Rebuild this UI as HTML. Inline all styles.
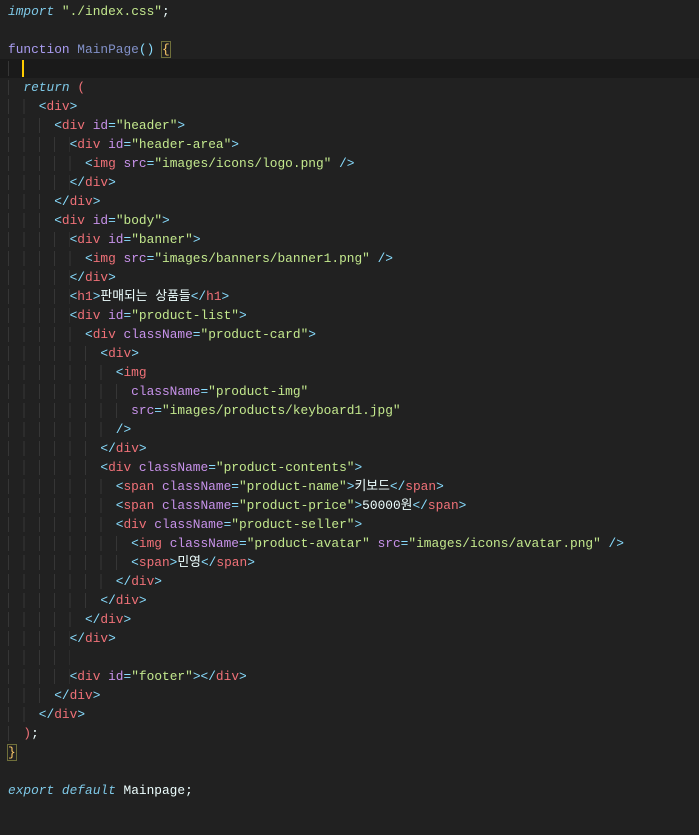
<!DOCTYPE html>
<html><head><meta charset="utf-8"><style>
html,body{margin:0;padding:0;background:#212121;width:699px;height:835px;overflow:hidden}
#c{position:absolute;top:2px;left:0;width:699px;font-family:"Liberation Mono","Noto Sans CJK KR",monospace;font-size:12.83px;color:#eeffff}
.l{height:19px;line-height:19px;white-space:pre;padding-left:8px;position:relative}
.cur{background:#1a1a1a}
.i{background:repeating-linear-gradient(to right,#363636 0 1px,transparent 1px 15.4px)}
.k{color:#7ec8e6;font-style:italic}
.f{color:#a99cf0}
.n{color:#8291c9}
.s{color:#c3e88d}
.p{color:#89ddff}
.t{color:#f07178}
.a{color:#c792ea}
.r{color:#f07178}
.y{color:#ffcb6b}
.box{outline:1px solid #6f6f3a}
.caret{position:absolute;left:22px;top:1px;width:2px;height:17px;background:#ffcc00}
</style></head><body><div id="c">
<div class="l"><span class="k">import</span> <span class="s">"./index.css"</span>;</div>
<div class="l"> </div>
<div class="l"><span class="f">function</span> <span class="n">MainPage</span><span class="p">()</span> <span class="y box">{</span></div>
<div class="l cur"><span class="i">  </span><span class="caret"></span></div>
<div class="l"><span class="i">  </span><span class="k">return</span> <span class="r">(</span></div>
<div class="l"><span class="i">    </span><span class="p">&lt;</span><span class="t">div</span><span class="p">&gt;</span></div>
<div class="l"><span class="i">      </span><span class="p">&lt;</span><span class="t">div</span> <span class="a">id</span><span class="p">=</span><span class="s">"header"</span><span class="p">&gt;</span></div>
<div class="l"><span class="i">        </span><span class="p">&lt;</span><span class="t">div</span> <span class="a">id</span><span class="p">=</span><span class="s">"header-area"</span><span class="p">&gt;</span></div>
<div class="l"><span class="i">          </span><span class="p">&lt;</span><span class="t">img</span> <span class="a">src</span><span class="p">=</span><span class="s">"images/icons/logo.png"</span> <span class="p">/&gt;</span></div>
<div class="l"><span class="i">        </span><span class="p">&lt;/</span><span class="t">div</span><span class="p">&gt;</span></div>
<div class="l"><span class="i">      </span><span class="p">&lt;/</span><span class="t">div</span><span class="p">&gt;</span></div>
<div class="l"><span class="i">      </span><span class="p">&lt;</span><span class="t">div</span> <span class="a">id</span><span class="p">=</span><span class="s">"body"</span><span class="p">&gt;</span></div>
<div class="l"><span class="i">        </span><span class="p">&lt;</span><span class="t">div</span> <span class="a">id</span><span class="p">=</span><span class="s">"banner"</span><span class="p">&gt;</span></div>
<div class="l"><span class="i">          </span><span class="p">&lt;</span><span class="t">img</span> <span class="a">src</span><span class="p">=</span><span class="s">"images/banners/banner1.png"</span> <span class="p">/&gt;</span></div>
<div class="l"><span class="i">        </span><span class="p">&lt;/</span><span class="t">div</span><span class="p">&gt;</span></div>
<div class="l"><span class="i">        </span><span class="p">&lt;</span><span class="t">h1</span><span class="p">&gt;</span>판매되는 상품들<span class="p">&lt;/</span><span class="t">h1</span><span class="p">&gt;</span></div>
<div class="l"><span class="i">        </span><span class="p">&lt;</span><span class="t">div</span> <span class="a">id</span><span class="p">=</span><span class="s">"product-list"</span><span class="p">&gt;</span></div>
<div class="l"><span class="i">          </span><span class="p">&lt;</span><span class="t">div</span> <span class="a">className</span><span class="p">=</span><span class="s">"product-card"</span><span class="p">&gt;</span></div>
<div class="l"><span class="i">            </span><span class="p">&lt;</span><span class="t">div</span><span class="p">&gt;</span></div>
<div class="l"><span class="i">              </span><span class="p">&lt;</span><span class="t">img</span></div>
<div class="l"><span class="i">                </span><span class="a">className</span><span class="p">=</span><span class="s">"product-img"</span></div>
<div class="l"><span class="i">                </span><span class="a">src</span><span class="p">=</span><span class="s">"images/products/keyboard1.jpg"</span></div>
<div class="l"><span class="i">              </span><span class="p">/&gt;</span></div>
<div class="l"><span class="i">            </span><span class="p">&lt;/</span><span class="t">div</span><span class="p">&gt;</span></div>
<div class="l"><span class="i">            </span><span class="p">&lt;</span><span class="t">div</span> <span class="a">className</span><span class="p">=</span><span class="s">"product-contents"</span><span class="p">&gt;</span></div>
<div class="l"><span class="i">              </span><span class="p">&lt;</span><span class="t">span</span> <span class="a">className</span><span class="p">=</span><span class="s">"product-name"</span><span class="p">&gt;</span>키보드<span class="p">&lt;/</span><span class="t">span</span><span class="p">&gt;</span></div>
<div class="l"><span class="i">              </span><span class="p">&lt;</span><span class="t">span</span> <span class="a">className</span><span class="p">=</span><span class="s">"product-price"</span><span class="p">&gt;</span>50000원<span class="p">&lt;/</span><span class="t">span</span><span class="p">&gt;</span></div>
<div class="l"><span class="i">              </span><span class="p">&lt;</span><span class="t">div</span> <span class="a">className</span><span class="p">=</span><span class="s">"product-seller"</span><span class="p">&gt;</span></div>
<div class="l"><span class="i">                </span><span class="p">&lt;</span><span class="t">img</span> <span class="a">className</span><span class="p">=</span><span class="s">"product-avatar"</span> <span class="a">src</span><span class="p">=</span><span class="s">"images/icons/avatar.png"</span> <span class="p">/&gt;</span></div>
<div class="l"><span class="i">                </span><span class="p">&lt;</span><span class="t">span</span><span class="p">&gt;</span>민영<span class="p">&lt;/</span><span class="t">span</span><span class="p">&gt;</span></div>
<div class="l"><span class="i">              </span><span class="p">&lt;/</span><span class="t">div</span><span class="p">&gt;</span></div>
<div class="l"><span class="i">            </span><span class="p">&lt;/</span><span class="t">div</span><span class="p">&gt;</span></div>
<div class="l"><span class="i">          </span><span class="p">&lt;/</span><span class="t">div</span><span class="p">&gt;</span></div>
<div class="l"><span class="i">        </span><span class="p">&lt;/</span><span class="t">div</span><span class="p">&gt;</span></div>
<div class="l"><span class="i">        </span></div>
<div class="l"><span class="i">        </span><span class="p">&lt;</span><span class="t">div</span> <span class="a">id</span><span class="p">=</span><span class="s">"footer"</span><span class="p">&gt;&lt;/</span><span class="t">div</span><span class="p">&gt;</span></div>
<div class="l"><span class="i">      </span><span class="p">&lt;/</span><span class="t">div</span><span class="p">&gt;</span></div>
<div class="l"><span class="i">    </span><span class="p">&lt;/</span><span class="t">div</span><span class="p">&gt;</span></div>
<div class="l"><span class="i">  </span><span class="r">)</span>;</div>
<div class="l"><span class="y box">}</span></div>
<div class="l"> </div>
<div class="l"><span class="k">export</span> <span class="k">default</span> Mainpage;</div>
</div></body></html>
